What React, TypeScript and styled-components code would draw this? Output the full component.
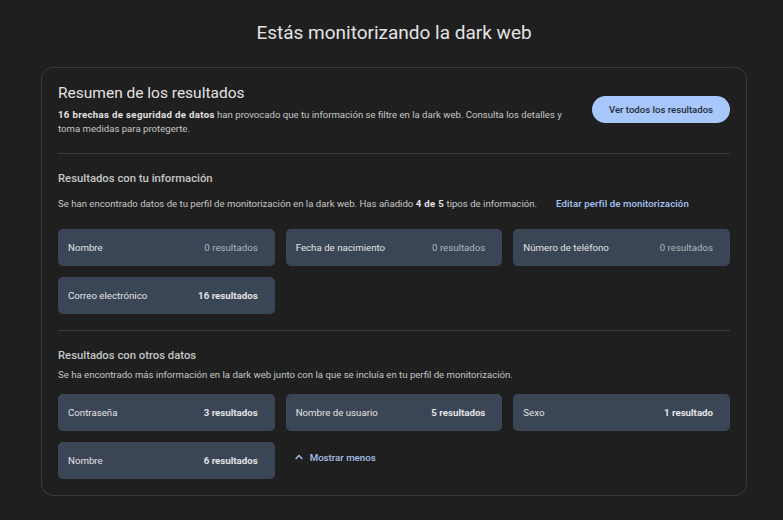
import styled, { createGlobalStyle } from 'styled-components'

const GlobalStyle = createGlobalStyle`
  html, body {
    margin: 0;
    background: #1f1f1f;
  }
  body {
    font-family: Roboto, "Liberation Sans", Arial, sans-serif;
    color: #e3e3e3;
  }
`

const Page = styled.div`
  padding: 20px 36px 25px 41px;
`

const PageTitle = styled.h1`
  margin: 0 0 21px;
  text-align: center;
  font-size: 19px;
  line-height: 26px;
  font-weight: 400;
  color: #e3e3e3;
`

const Card = styled.section`
  border: 1px solid #3a3a3a;
  border-radius: 12px;
  padding: 15px 16px 16px 16px;
`

const Header = styled.div`
  display: flex;
  align-items: center;
  justify-content: space-between;
  padding-bottom: 17px;
  border-bottom: 1px solid #3a3a3a;
`

const HeaderText = styled.div`
  max-width: 515px;
`

const CardTitle = styled.h2`
  margin: 0 0 5px;
  font-size: 15.5px;
  line-height: 20px;
  font-weight: 400;
  color: #e3e3e3;
`

const Text = styled.p<{ $gap?: number }>`
  margin: 0 0 ${p => p.$gap ?? 0}px;
  font-size: 9.6px;
  line-height: 14px;
  color: #c4c7c5;

  b {
    font-weight: 700;
    letter-spacing: 0.35px;
    color: #e3e3e3;
  }
`

const PrimaryButton = styled.button`
  width: 138px;
  height: 27px;
  border: none;
  border-radius: 14px;
  background: #a8c7fa;
  color: #1f2a3a;
  font-family: inherit;
  font-size: 9.6px;
  font-weight: 500;
  cursor: pointer;
`

const Section = styled.div<{ $divider?: boolean }>`
  padding-top: 17px;
  padding-bottom: ${p => (p.$divider ? 16 : 0)}px;
  border-bottom: ${p => (p.$divider ? '1px solid #3a3a3a' : 'none')};
`

const SectionTitle = styled.h3<{ $gap: number }>`
  margin: 0 0 ${p => p.$gap}px;
  font-size: 11.3px;
  line-height: 16px;
  font-weight: 500;
  color: #c4c7c5;
`

const Link = styled.a`
  margin-left: 19px;
  color: #a8c7fa;
  font-weight: 500;
  letter-spacing: 0.12px;
  text-decoration: none;
  cursor: pointer;
`

const Grid = styled.div`
  display: grid;
  grid-template-columns: repeat(3, 1fr);
  gap: 11px;
`

const Tile = styled.div`
  height: 37px;
  box-sizing: border-box;
  padding: 0 17px 0 10px;
  border-radius: 5px;
  background: #3a4556;
  display: flex;
  align-items: center;
  justify-content: space-between;
  font-size: 9.7px;
`

const TileLabel = styled.span`
  color: #e3e3e3;
`

const TileCount = styled.span<{ $found: boolean }>`
  color: ${p => (p.$found ? '#e3e3e3' : '#b0b4ba')};
  font-weight: ${p => (p.$found ? 700 : 400)};
`

const ToggleButton = styled.button`
  align-self: center;
  justify-self: start;
  display: flex;
  align-items: center;
  gap: 6px;
  margin: 0 0 7px 8px;
  padding: 0;
  border: none;
  background: none;
  color: #a8c0e6;
  font-family: inherit;
  font-size: 9.7px;
  font-weight: 500;
  cursor: pointer;
`

type Item = { label: string; count: number }

const ownData: Item[] = [
  { label: 'Nombre', count: 0 },
  { label: 'Fecha de nacimiento', count: 0 },
  { label: 'Número de teléfono', count: 0 },
  { label: 'Correo electrónico', count: 16 },
]

const otherData: Item[] = [
  { label: 'Contraseña', count: 3 },
  { label: 'Nombre de usuario', count: 5 },
  { label: 'Sexo', count: 1 },
  { label: 'Nombre', count: 6 },
]

function ResultTile({ label, count }: Item) {
  return (
    <Tile>
      <TileLabel>{label}</TileLabel>
      <TileCount $found={count > 0}>
        {count} {count === 1 ? 'resultado' : 'resultados'}
      </TileCount>
    </Tile>
  )
}

export default function App() {
  return (
    <>
      <GlobalStyle />
      <Page>
        <PageTitle>Estás monitorizando la dark web</PageTitle>
        <Card>
          <Header>
            <HeaderText>
              <CardTitle>Resumen de los resultados</CardTitle>
              <Text>
                <b>16 brechas de seguridad de datos</b> han provocado que tu información se filtre en la
                dark web. Consulta los detalles y toma medidas para protegerte.
              </Text>
            </HeaderText>
            <PrimaryButton>Ver todos los resultados</PrimaryButton>
          </Header>

          <Section $divider>
            <SectionTitle $gap={10}>Resultados con tu información</SectionTitle>
            <Text $gap={18}>
              Se han encontrado datos de tu perfil de monitorización en la dark web. Has añadido{' '}
              <b>4 de 5</b> tipos de información.
              <Link>Editar perfil de monitorización</Link>
            </Text>
            <Grid>
              {ownData.map(item => (
                <ResultTile key={item.label} {...item} />
              ))}
            </Grid>
          </Section>

          <Section>
            <SectionTitle $gap={4}>Resultados con otros datos</SectionTitle>
            <Text $gap={12}>
              Se ha encontrado más información en la dark web junto con la que se incluía en tu perfil de
              monitorización.
            </Text>
            <Grid>
              {otherData.map(item => (
                <ResultTile key={item.label + item.count} {...item} />
              ))}
              <ToggleButton>
                <svg width="10" height="10" viewBox="0 0 24 24" fill="none" stroke="currentColor" strokeWidth="3.2" strokeLinecap="square">
                  <path d="M5 15.5l7-7 7 7" />
                </svg>
                Mostrar menos
              </ToggleButton>
            </Grid>
          </Section>
        </Card>
      </Page>
    </>
  )
}
